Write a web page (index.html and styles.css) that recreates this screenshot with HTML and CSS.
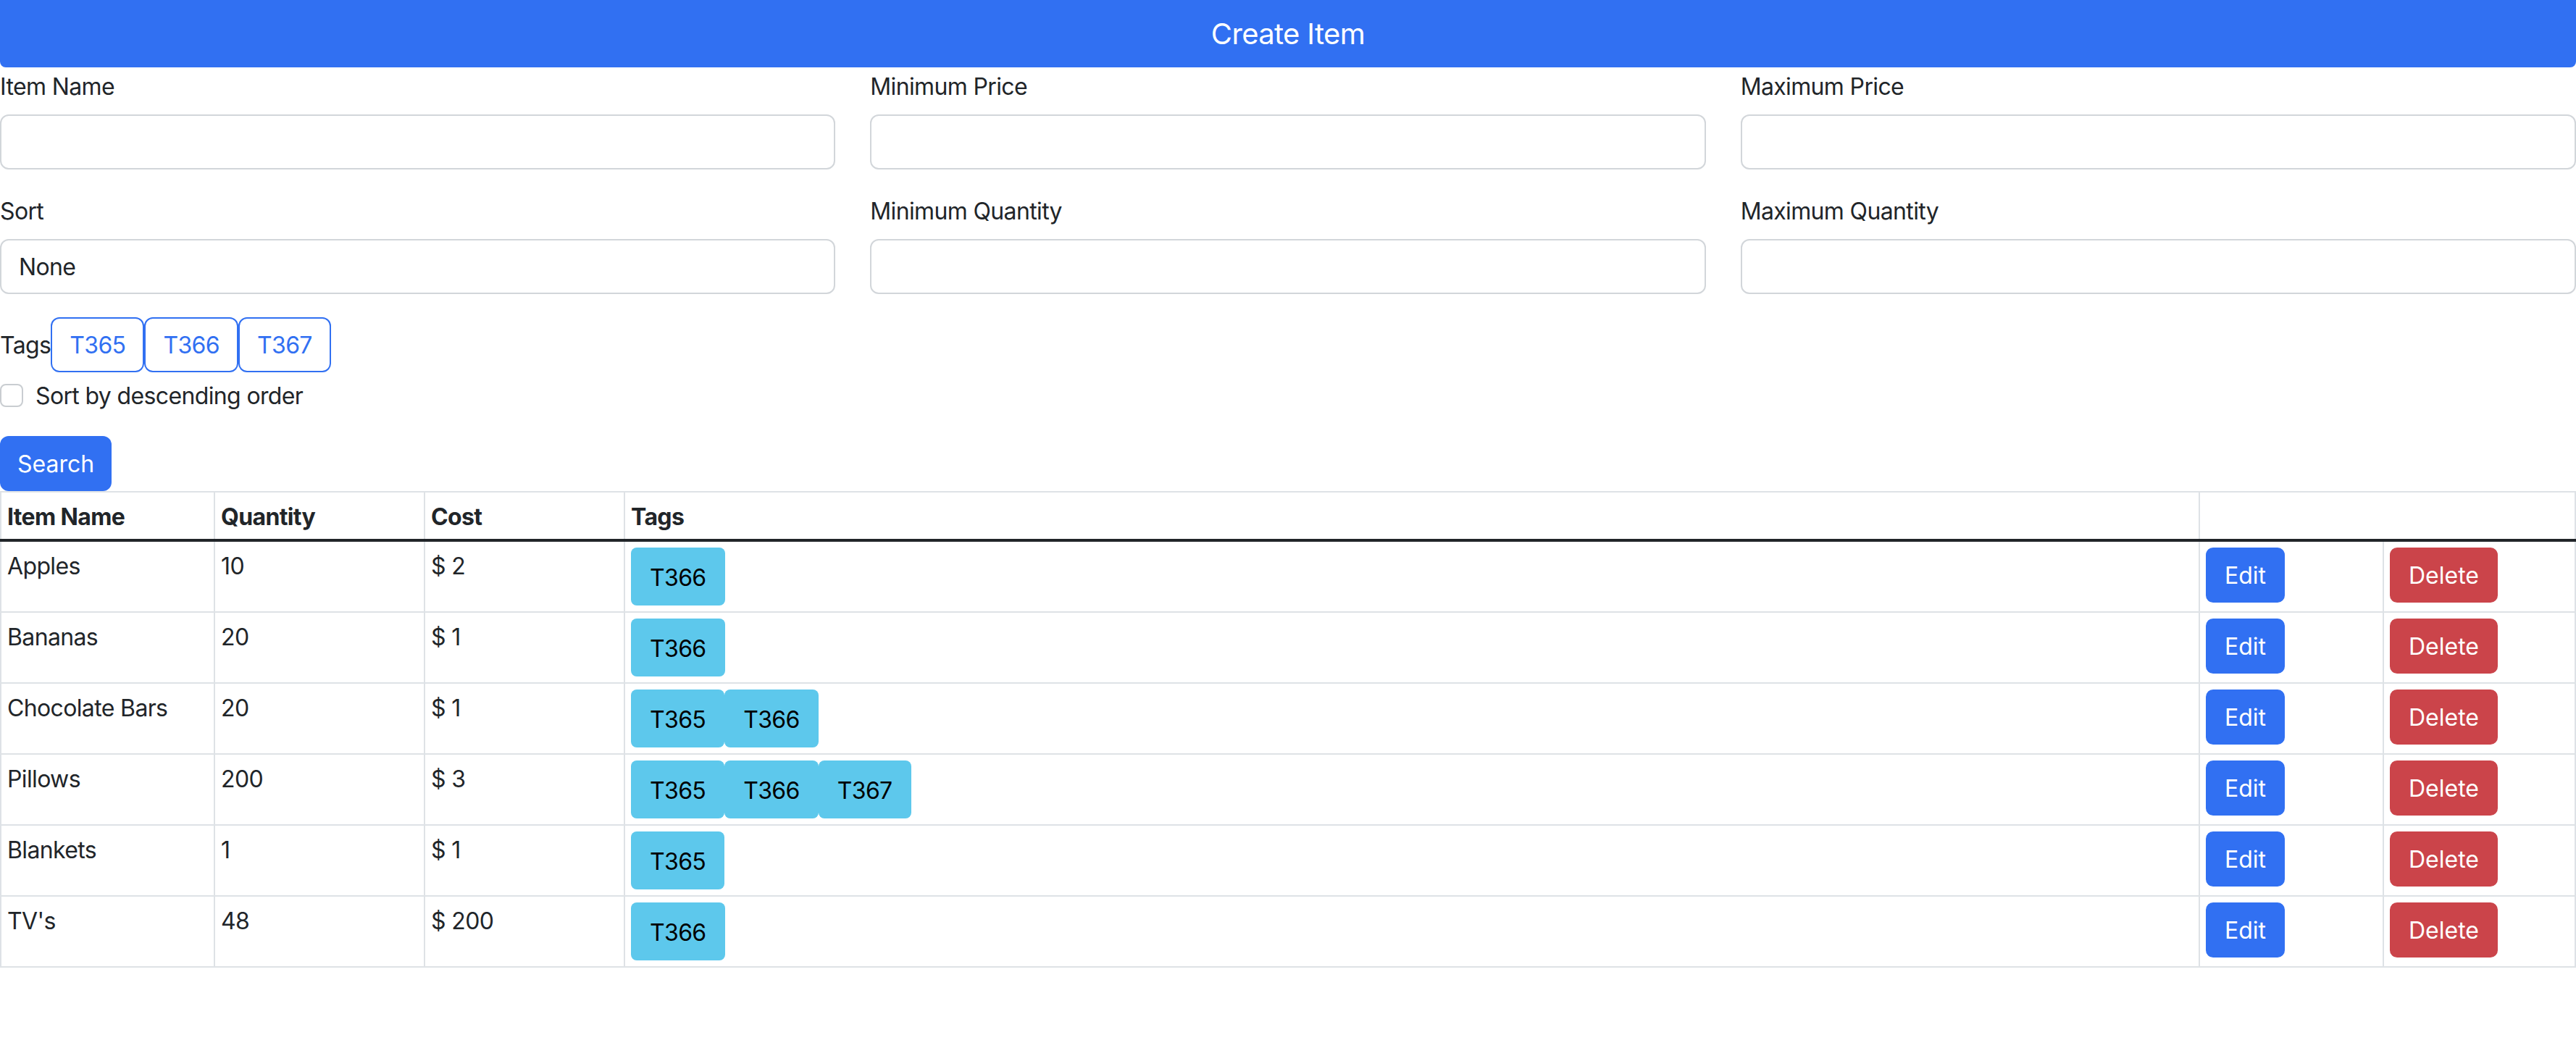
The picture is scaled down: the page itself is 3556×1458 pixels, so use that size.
FILE: index.html
```html
<!DOCTYPE html>
<html lang="en">
<head>
<meta charset="utf-8">
<title>Items</title>
<link rel="stylesheet" href="styles.css">
</head>
<body>
<button class="create-btn" type="button">Create Item</button>

<form class="filters">
  <div class="field">
    <label class="field-label">Item Name</label>
    <input class="field-input" type="text">
  </div>
  <div class="field">
    <label class="field-label">Minimum Price</label>
    <input class="field-input" type="text">
  </div>
  <div class="field">
    <label class="field-label">Maximum Price</label>
    <input class="field-input" type="text">
  </div>
  <div class="field">
    <label class="field-label">Sort</label>
    <select class="field-input"><option>None</option></select>
  </div>
  <div class="field">
    <label class="field-label">Minimum Quantity</label>
    <input class="field-input" type="text">
  </div>
  <div class="field">
    <label class="field-label">Maximum Quantity</label>
    <input class="field-input" type="text">
  </div>
</form>

<div class="tags-row">
  <span class="tags-label">Tags</span>
  <button class="tag-toggle" type="button">T365</button>
  <button class="tag-toggle" type="button">T366</button>
  <button class="tag-toggle" type="button">T367</button>
</div>

<label class="check-row">
  <input class="check-box" type="checkbox">
  <span>Sort by descending order</span>
</label>

<button class="search-btn" type="button">Search</button>

<table class="items">
  <colgroup>
    <col class="col-name">
    <col class="col-qty">
    <col class="col-cost">
    <col>
    <col class="col-edit">
    <col class="col-del">
  </colgroup>
  <thead>
    <tr><th>Item Name</th><th>Quantity</th><th>Cost</th><th>Tags</th><th colspan="2"></th></tr>
  </thead>
  <tbody>
    <tr><td>Apples</td><td>10</td><td>$ 2</td><td><div class="tag-list"><span class="tag">T366</span></div></td><td><button class="btn-edit" type="button">Edit</button></td><td><button class="btn-del" type="button">Delete</button></td></tr>
    <tr><td>Bananas</td><td>20</td><td>$ 1</td><td><div class="tag-list"><span class="tag">T366</span></div></td><td><button class="btn-edit" type="button">Edit</button></td><td><button class="btn-del" type="button">Delete</button></td></tr>
    <tr><td>Chocolate Bars</td><td>20</td><td>$ 1</td><td><div class="tag-list"><span class="tag">T365</span><span class="tag">T366</span></div></td><td><button class="btn-edit" type="button">Edit</button></td><td><button class="btn-del" type="button">Delete</button></td></tr>
    <tr><td>Pillows</td><td>200</td><td>$ 3</td><td><div class="tag-list"><span class="tag">T365</span><span class="tag">T366</span><span class="tag">T367</span></div></td><td><button class="btn-edit" type="button">Edit</button></td><td><button class="btn-del" type="button">Delete</button></td></tr>
    <tr><td>Blankets</td><td>1</td><td>$ 1</td><td><div class="tag-list"><span class="tag">T365</span></div></td><td><button class="btn-edit" type="button">Edit</button></td><td><button class="btn-del" type="button">Delete</button></td></tr>
    <tr><td>TV's</td><td>48</td><td>$ 200</td><td><div class="tag-list"><span class="tag">T366</span></div></td><td><button class="btn-edit" type="button">Edit</button></td><td><button class="btn-del" type="button">Delete</button></td></tr>
  </tbody>
</table>
</body>
</html>
```

FILE: styles.css
```css
* {
  box-sizing: border-box;
}

body {
  margin: 0;
  font-family: Inter, "Liberation Sans", sans-serif;
  font-size: 32px;
  line-height: 48px;
  letter-spacing: -0.02em;
  color: #212529;
  background: #ffffff;
}

button,
input,
select {
  font-family: inherit;
  font-size: 32px;
  line-height: 48px;
  letter-spacing: inherit;
}

.create-btn {
  display: block;
  width: 100%;
  height: 93px;
  margin: 0;
  padding-top: 2px;
  border: 0;
  border-radius: 0 0 8px 8px;
  background: #3170f2;
  color: #ffffff;
  font-size: 40px;
  line-height: 60px;
}

.filters {
  display: grid;
  grid-template-columns: repeat(3, 1fr);
  column-gap: 48px;
  margin: 1px 0 0 0;
}

.field {
  margin-bottom: 32px;
}

.field-label {
  display: block;
  padding-top: 2px;
  margin-bottom: 14px;
}

.field-input {
  display: block;
  width: 100%;
  height: 76px;
  margin: 0;
  padding: 2px 24px 0 24px;
  border: 2px solid #d2d6da;
  border-radius: 12px;
  background: #ffffff;
  color: #212529;
  -webkit-appearance: none;
  appearance: none;
  outline: none;
}

.tags-row {
  display: flex;
  align-items: center;
}

.tags-label {
  padding-top: 2px;
}

.tag-toggle {
  height: 76px;
  margin: 0;
  padding: 2px 24px 0 24px;
  border: 2px solid #3170f2;
  border-radius: 12px;
  background: #ffffff;
  color: #3170f2;
}

.check-row {
  display: flex;
  align-items: center;
  gap: 17px;
  height: 48px;
  margin-top: 8px;
}

.check-row span {
  padding-top: 2px;
}

.check-box {
  width: 32px;
  height: 32px;
  margin: 0;
  border: 2px solid #c9cdd1;
  border-radius: 8px;
  background: #ffffff;
  -webkit-appearance: none;
  appearance: none;
}

.search-btn {
  display: block;
  height: 76px;
  margin: 32px 0 0 0;
  padding: 2px 24px 0 24px;
  border: 0;
  border-radius: 12px;
  background: #3170f2;
  color: #ffffff;
  letter-spacing: normal;
}

.items {
  width: 100%;
  border-collapse: collapse;
  table-layout: fixed;
}

.col-name { width: 295px; }
.col-qty { width: 290px; }
.col-cost { width: 276px; }
.col-edit { width: 254px; }
.col-del { width: 265px; }

.items th,
.items td {
  border: 2px solid #dee2e6;
  padding: 10px 8px 6px 8px;
  text-align: left;
  vertical-align: top;
}

.items th {
  font-weight: 700;
}

.items tbody {
  border-top: 4px solid #212529;
}

.items td:nth-child(n+4) {
  padding-top: 8px;
  padding-bottom: 8px;
}

.tag-list {
  display: flex;
}

.tag {
  display: block;
  padding: 18px 26px 14px 26px;
  border-radius: 8px;
  background: #5dc8ec;
  color: #000000;
}

.btn-edit,
.btn-del {
  display: block;
  height: 76px;
  margin: 0;
  padding: 2px 26px 0 26px;
  border: 0;
  border-radius: 10px;
  color: #ffffff;
  letter-spacing: normal;
}

.btn-edit {
  background: #3170f2;
}

.btn-del {
  background: #cb444a;
}
```
